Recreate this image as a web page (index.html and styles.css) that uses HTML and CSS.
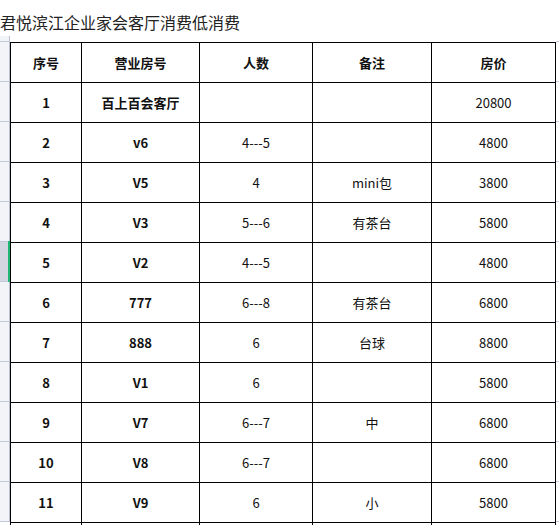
FILE: index.html
```html
<!DOCTYPE html>
<html lang="zh">
<head>
<meta charset="utf-8">
<title>君悦滨江企业家会客厅消费低消费</title>
<link rel="stylesheet" href="styles.css">
</head>
<body>
<div class="title">君悦滨江企业家会客厅消费低消费</div>
<div class="sheet">
  <div class="gutter">
    <div class="g-top"></div>
    <div class="g-row"></div>
    <div class="g-row"></div>
    <div class="g-row"></div>
    <div class="g-row"></div>
    <div class="g-row"></div>
    <div class="g-row selected"></div>
    <div class="g-row"></div>
    <div class="g-row"></div>
    <div class="g-row"></div>
    <div class="g-row"></div>
    <div class="g-row"></div>
    <div class="g-row"></div>
  </div>
  <table class="grid">
    <colgroup>
      <col class="c1"><col class="c2"><col class="c3"><col class="c4"><col class="c5">
    </colgroup>
    <tr class="head"><td>序号</td><td>营业房号</td><td>人数</td><td>备注</td><td>房价</td></tr>
    <tr><td class="b">1</td><td class="b">百上百会客厅</td><td></td><td></td><td>20800</td></tr>
    <tr><td class="b">2</td><td class="b">v6</td><td>4---5</td><td></td><td>4800</td></tr>
    <tr><td class="b">3</td><td class="b">V5</td><td>4</td><td>mini包</td><td>3800</td></tr>
    <tr><td class="b">4</td><td class="b">V3</td><td>5---6</td><td>有茶台</td><td>5800</td></tr>
    <tr><td class="b">5</td><td class="b">V2</td><td>4---5</td><td></td><td>4800</td></tr>
    <tr><td class="b">6</td><td class="b">777</td><td>6---8</td><td>有茶台</td><td>6800</td></tr>
    <tr><td class="b">7</td><td class="b">888</td><td>6</td><td>台球</td><td>8800</td></tr>
    <tr><td class="b">8</td><td class="b">V1</td><td>6</td><td></td><td>5800</td></tr>
    <tr><td class="b">9</td><td class="b">V7</td><td>6---7</td><td>中</td><td>6800</td></tr>
    <tr><td class="b">10</td><td class="b">V8</td><td>6---7</td><td></td><td>6800</td></tr>
    <tr><td class="b">11</td><td class="b">V9</td><td>6</td><td>小</td><td>5800</td></tr>
    <tr><td class="b"></td><td class="b"></td><td></td><td></td><td></td></tr>
  </table>
  <div class="ticks">
    <div class="t-top"></div>
    <div class="t-row"></div><div class="t-row"></div><div class="t-row"></div><div class="t-row"></div>
    <div class="t-row"></div><div class="t-row"></div><div class="t-row"></div><div class="t-row"></div>
    <div class="t-row"></div><div class="t-row"></div><div class="t-row"></div><div class="t-row"></div>
  </div>
</div>
</body>
</html>
```

FILE: styles.css
```css
html, body {
  margin: 0;
  padding: 0;
  background: #ffffff;
  overflow: hidden;
}
body {
  width: 559px;
  height: 525px;
  font-family: "Noto Sans CJK SC", "Noto Sans", sans-serif;
  color: #111;
}
.title {
  height: 36px;
  padding-top: 0;
  box-sizing: border-box;
  font-size: 16px;
  line-height: 44px;
  color: #222;
  white-space: nowrap;
}
.sheet {
  display: flex;
  align-items: flex-start;
}
.gutter {
  width: 9px;
  border-right: 1px solid #b9c0d4;
  background: #f3f4f8;
  flex: none;
}
.g-top {
  height: 5px;
  border-bottom: 1px solid #c3c9da;
}
.g-row {
  height: 39px;
  border-bottom: 1px solid #c3c9da;
}
.g-row.selected {
  background: #d3d6e0;
  box-shadow: inset -1px 0 0 #1fb574;
  position: relative;
}
.g-row.selected::after {
  content: "";
  position: absolute;
  right: -1px;
  top: -1px;
  width: 2px;
  height: 41px;
  background: #1fb574;
}
.grid {
  border-collapse: collapse;
  table-layout: fixed;
  width: 545px;
  margin-top: 6px;
  flex: none;
}
.c1 { width: 71px; }
.c2 { width: 118px; }
.c3 { width: 113px; }
.c4 { width: 119px; }
.c5 { width: 124px; }
.grid td {
  border: 1px solid #000;
  height: 39px;
  padding: 0;
  text-align: center;
  vertical-align: middle;
  font-size: 13px;
  line-height: 16px;
  color: #111;
  white-space: nowrap;
}
.grid .head td,
.grid td.b {
  font-weight: 700;
}
.ticks {
  flex: none;
  width: 5px;
}
.t-top {
  height: 5px;
  border-bottom: 1px solid #c8cde0;
}
.t-row {
  height: 39px;
  border-bottom: 1px solid #c8cde0;
}
```
